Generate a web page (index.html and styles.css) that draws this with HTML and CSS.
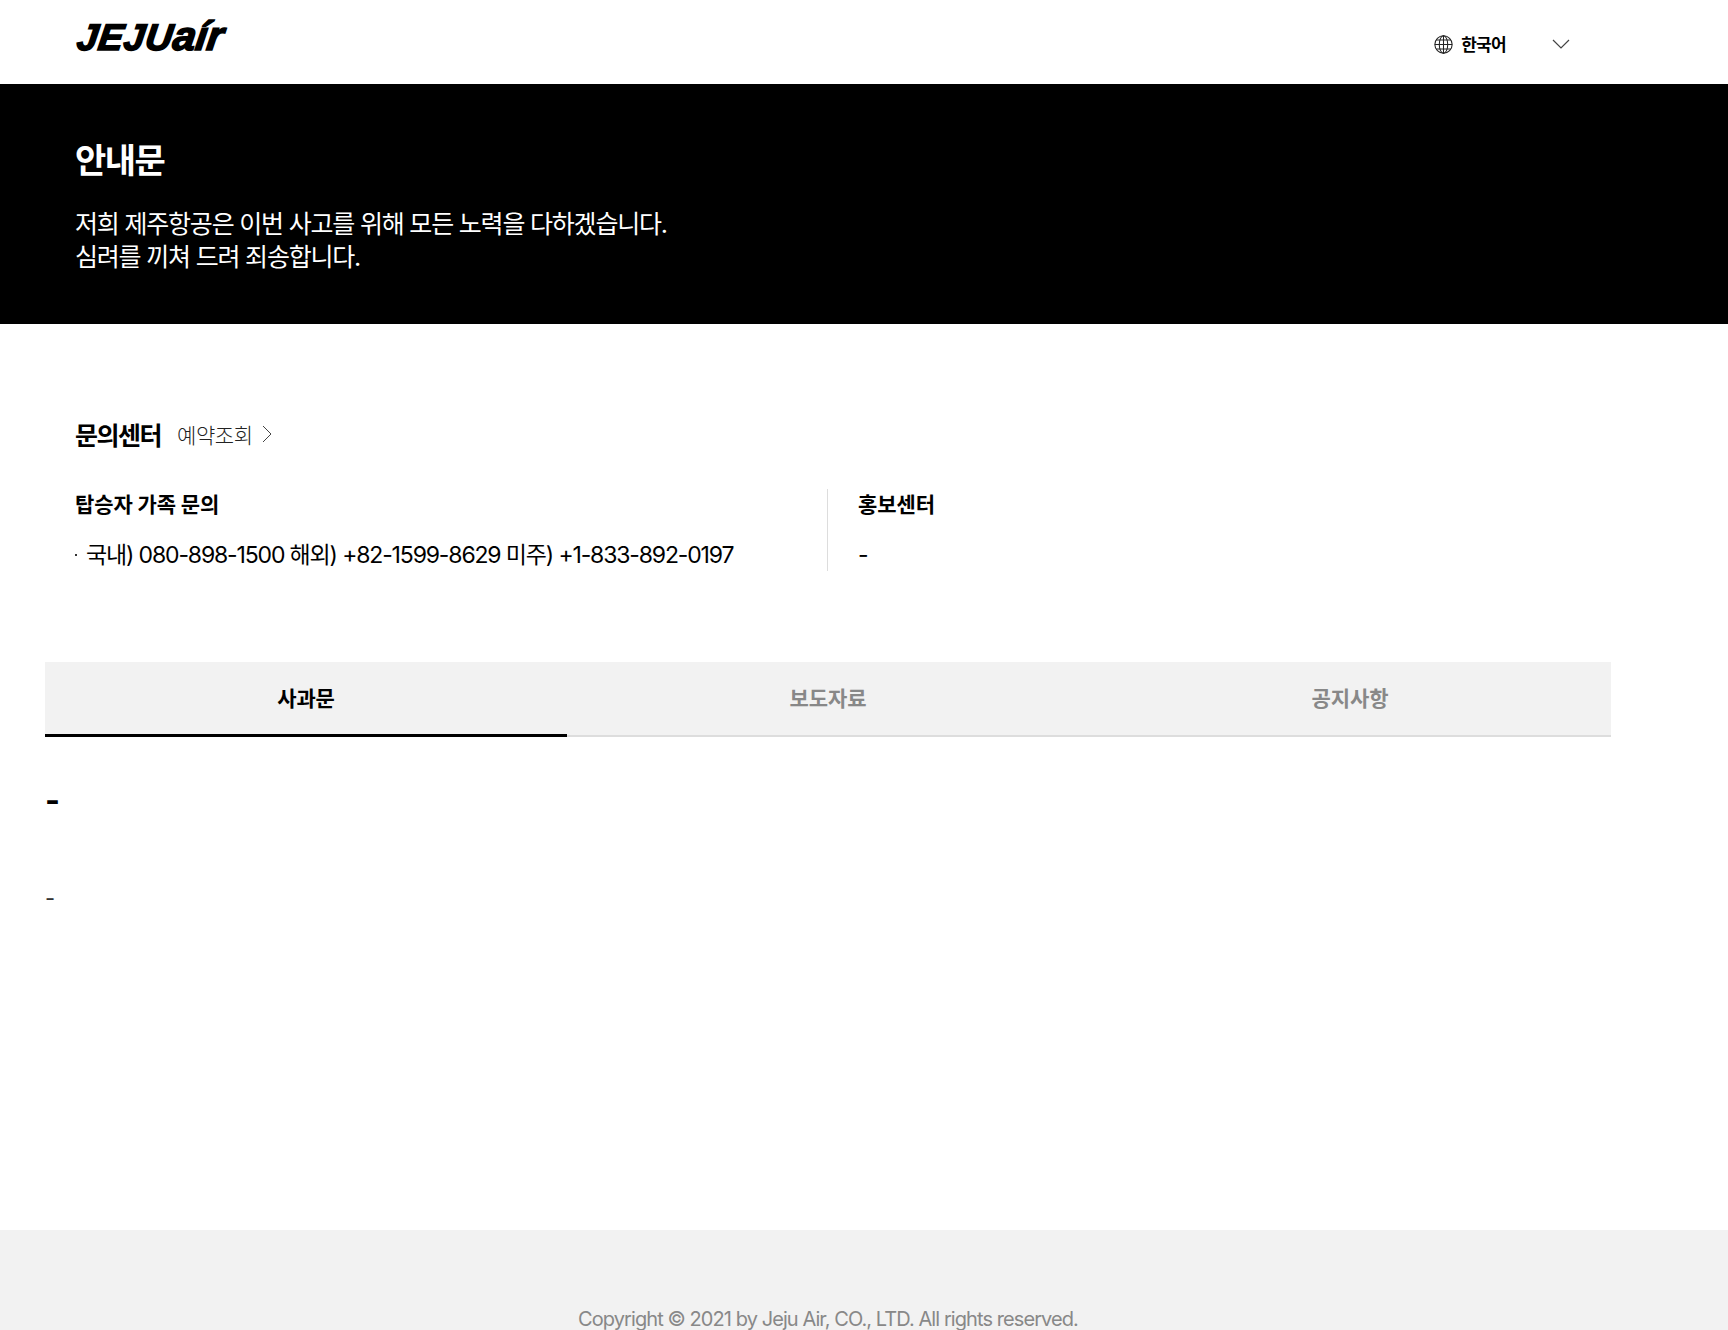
FILE: index.html
```html
<!DOCTYPE html>
<html lang="ko">
<head>
<meta charset="utf-8">
<title>제주항공 안내문</title>
<link rel="stylesheet" href="styles.css">
</head>
<body>
<header class="topbar">
  <div class="logo"><span class="logo-jeju">JEJU</span><span class="logo-air">aír</span></div>
  <div class="lang">
    <svg class="globe" viewBox="0 0 18 18" width="19" height="19" fill="none" stroke="#222" stroke-width="1">
      <circle cx="9" cy="9" r="8.2"/>
      <ellipse cx="9" cy="9" rx="4" ry="8.2"/>
      <path d="M9 .8v16.4M.8 9h16.4M2 4.8h14M2 13.2h14"/>
    </svg>
    <span class="lang-label">한국어</span>
    <svg class="lang-caret" viewBox="0 0 18 10" width="18" height="10" fill="none" stroke="#444" stroke-width="1.2">
      <path d="M1 1l8 8 8-8"/>
    </svg>
  </div>
</header>
<section class="hero">
  <h1 class="hero-title">안내문</h1>
  <p class="hero-text">저희 제주항공은 이번 사고를 위해 모든 노력을 다하겠습니다.<br>심려를 끼쳐 드려 죄송합니다.</p>
</section>
<section class="contact">
  <div class="contact-head">
    <h2 class="contact-title">문의센터</h2>
    <a class="contact-link">예약조회</a>
    <svg class="contact-caret" viewBox="0 0 10 18" width="10" height="18" fill="none" stroke="#444" stroke-width="1">
      <path d="M1 1l8 8-8 8"/>
    </svg>
  </div>
  <div class="contact-cols">
    <div class="contact-col">
      <h3 class="col-title">탑승자 가족 문의</h3>
      <p class="col-line"><i class="dot"></i>국내) 080-898-1500 해외) +82-1599-8629 미주) +1-833-892-0197</p>
    </div>
    <div class="contact-col contact-col-right">
      <h3 class="col-title">홍보센터</h3>
      <p class="col-line">-</p>
    </div>
  </div>
</section>
<nav class="tabs">
  <div class="tab tab-active">사과문</div>
  <div class="tab">보도자료</div>
  <div class="tab">공지사항</div>
</nav>
<main class="article">
  <h2 class="article-title">-</h2>
  <p class="article-body">-</p>
</main>
<footer class="footer">Copyright © 2021 by Jeju Air, CO., LTD. All rights reserved.</footer>
</body>
</html>
```
FILE: styles.css
```css
* { box-sizing: border-box; }
html, body { margin: 0; padding: 0; }
body {
  height: 1330px;
  overflow: hidden;
  display: flex;
  flex-direction: column;
  background: #fff;
  color: #000;
  font-family: Inter, "Noto Sans CJK KR", sans-serif;
}
h1, h2, h3, p { margin: 0; }

.topbar {
  height: 84px;
  flex: none;
  display: flex;
  justify-content: space-between;
  align-items: flex-start;
  padding: 0 158px 0 75px;
}
.logo {
  margin-top: 17px;
  margin-left: 2px;
  font-family: "Liberation Sans", sans-serif;
  font-weight: 700;
  font-style: italic;
  line-height: 38px;
  color: #000;
  -webkit-text-stroke: 1.6px #000;
  white-space: nowrap;
  transform: skewX(-8deg);
}
.logo-jeju { font-size: 37px; letter-spacing: 0.8px; }
.logo-air { font-size: 41px; letter-spacing: 0; }
.lang {
  display: flex;
  align-items: center;
  margin-top: 33px;
  height: 22px;
}
.globe { flex: none; }
.lang-label {
  margin-left: 8px;
  margin-bottom: 2px;
  font-size: 17px;
  font-weight: 700;
  letter-spacing: -0.7px;
}
.lang-caret { margin-left: 46px; flex: none; }

.hero {
  height: 240px;
  flex: none;
  background: #000;
  color: #fff;
  padding: 54px 75px 0;
}
.hero-title {
  font-size: 34px;
  font-weight: 700;
  line-height: 46px;
  letter-spacing: -1.5px;
}
.hero-text {
  margin-top: 24px;
  font-size: 25px;
  font-weight: 400;
  line-height: 33px;
  letter-spacing: -1.2px;
}

.contact { padding: 94px 75px 0; flex: none; }
.contact-head { display: flex; align-items: center; height: 32px; }
.contact-title {
  font-size: 25px;
  font-weight: 700;
  letter-spacing: -1.5px;
}
.contact-link {
  margin-left: 16px;
  font-size: 21px;
  font-weight: 300;
  letter-spacing: -0.4px;
  color: #222;
}
.contact-caret { margin-left: 9px; }
.contact-cols {
  display: grid;
  grid-template-columns: 752px 1fr;
  margin-top: 39px;
}
.contact-col { height: 82px; padding-top: 1px; }
.contact-col-right {
  border-left: 1px solid #ddd;
  padding-left: 30px;
}
.col-title {
  font-size: 21px;
  font-weight: 700;
  line-height: 30px;
  letter-spacing: -0.1px;
}
.col-line {
  margin-top: 20px;
  font-size: 23px;
  font-weight: 400;
  line-height: 30px;
  letter-spacing: -1.15px;
  white-space: nowrap;
  display: flex;
  align-items: center;
}
.dot {
  width: 2px;
  height: 2px;
  margin-right: 9px;
  background: #333;
  flex: none;
}

.tabs {
  display: grid;
  grid-template-columns: repeat(3, 522px);
  margin: 91px 0 0 45px;
  flex: none;
  width: 1566px;
}
.tab {
  height: 75px;
  padding-bottom: 3px;
  background: #f2f2f2;
  border-bottom: 2px solid #ddd;
  display: flex;
  align-items: center;
  justify-content: center;
  font-size: 21px;
  font-weight: 700;
  letter-spacing: -0.1px;
  color: #888;
}
.tab-active {
  padding-bottom: 2px;
  border-bottom: 3px solid #000;
  color: #000;
}

.article { padding: 44px 0 0 45px; flex: 1; }
.article-title {
  font-size: 32px;
  font-weight: 700;
  line-height: 40px;
}
.article-body {
  margin-top: 62px;
  font-size: 22px;
  font-weight: 400;
  line-height: 30px;
  color: #333;
}

.footer {
  height: 100px;
  flex: none;
  background: #f2f2f2;
  padding: 75px 72px 0 0;
  text-align: center;
  font-size: 20px;
  line-height: 28px;
  font-weight: 400;
  letter-spacing: -0.92px;
  color: #888;
}
```
